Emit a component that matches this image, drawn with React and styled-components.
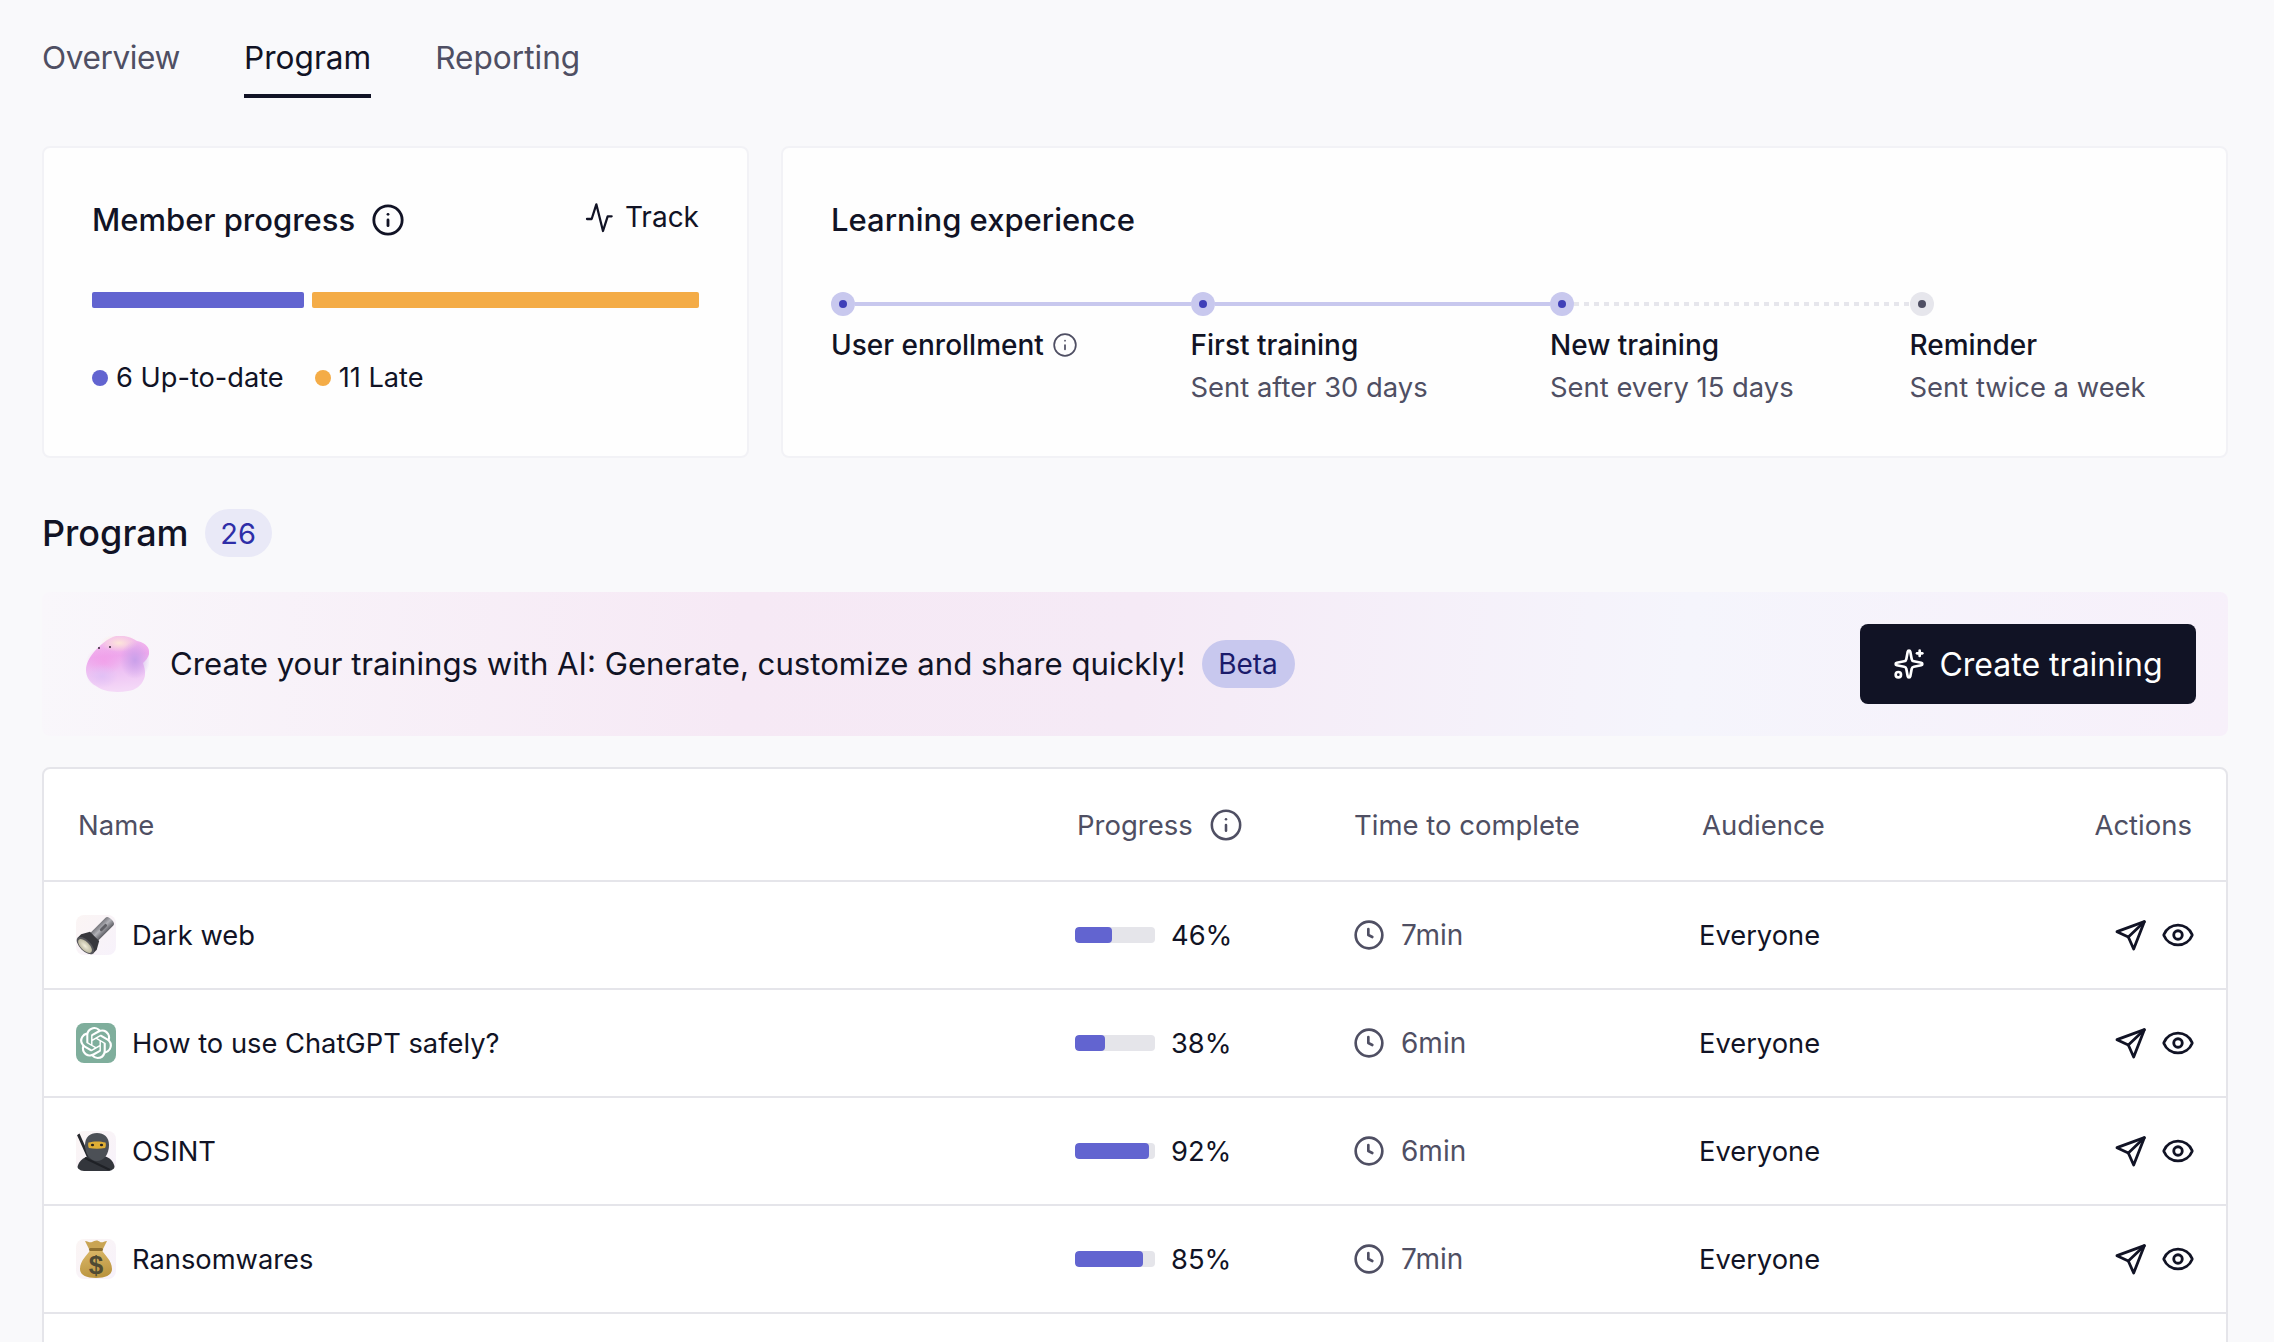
import React from 'react';
import styled, { createGlobalStyle } from 'styled-components';
import { Info, Eye, Sparkles } from 'lucide-react';
import { SiOpenai } from 'react-icons/si';

const GlobalStyle = createGlobalStyle`
  html, body {
    margin: 0;
    height: 1342px;
    overflow: hidden;
    background: #f9f9fb;
  }
  * { box-sizing: border-box; }
`;

const Page = styled.div`
  height: 1342px;
  overflow: hidden;
  padding: 38px 46px 0 42px;
  font-family: "Inter", "Liberation Sans", sans-serif;
  color: #111325;
  display: flex;
  flex-direction: column;
`;

const Tabs = styled.nav`
  display: flex;
  gap: 64px;
`;

const Tab = styled.a`
  font-size: 31.6px;
  line-height: 40px;
  padding-bottom: 16px;
  border-bottom: 4px solid ${(p) => (p.$active ? '#111325' : 'transparent')};
  color: ${(p) => (p.$active ? '#111325' : '#4f4f63')};
  &:first-child {
    letter-spacing: -0.4px;
  }
`;

const Cards = styled.div`
  display: grid;
  grid-template-columns: 707px 1fr;
  gap: 32px;
  margin-top: 48px;
`;

const Card = styled.section`
  height: 312px;
  background: #fefefe;
  border: 2px solid #f2f2f6;
  border-radius: 8px;
  padding: 52px 48px 0;
`;

const CardHead = styled.div`
  display: flex;
  justify-content: space-between;
  align-items: flex-start;
`;

const CardTitle = styled.h2`
  margin: 0;
  display: flex;
  align-items: center;
  gap: 16px;
  font-size: 31px;
  line-height: 40px;
  font-weight: 500;
`;

const TrackLink = styled.a`
  display: flex;
  align-items: center;
  gap: 8px;
  font-size: 28px;
  line-height: 32px;
  margin-top: 1px;
`;

const SplitBar = styled.div`
  display: flex;
  gap: 8px;
  margin-top: 52px;
`;

const Segment = styled.div`
  height: 16px;
  border-radius: 2px;
  flex: ${(p) => p.$flex};
  background: ${(p) => p.$color};
`;

const Legend = styled.div`
  display: flex;
  gap: 31px;
  margin-top: 52px;
`;

const LegendItem = styled.div`
  display: flex;
  align-items: center;
  gap: 8px;
  font-size: 27.2px;
  line-height: 36px;
`;

const LegendDot = styled.span`
  width: 16px;
  height: 16px;
  border-radius: 50%;
  background: ${(p) => p.$color};
`;

const Timeline = styled.div`
  display: grid;
  grid-template-columns: repeat(3, 359.5px) 1fr;
  margin-top: 52px;
`;

const StepTrack = styled.div`
  display: flex;
  align-items: center;
  height: 24px;
`;

const StepDot = styled.span`
  flex: none;
  width: 24px;
  height: 24px;
  border-radius: 50%;
  display: grid;
  place-items: center;
  background: ${(p) => (p.$muted ? '#e6e6ec' : '#c8c8ee')};
  &::after {
    content: '';
    width: 8px;
    height: 8px;
    border-radius: 50%;
    background: ${(p) => (p.$muted ? '#4f4f63' : '#4040b8')};
  }
`;

const StepLine = styled.span`
  flex: 1;
  height: 4px;
  background: #c8c8ee;
`;

const StepDotted = styled.span`
  flex: 1;
  height: 4px;
  background: repeating-linear-gradient(90deg, #e6e6ec 0 5px, transparent 5px 10px);
`;

const StepLabel = styled.div`
  display: flex;
  align-items: center;
  gap: 8px;
  margin-top: 11px;
  font-size: 28px;
  font-weight: 450;
  line-height: 36px;
`;

const StepSub = styled.div`
  margin-top: 6px;
  font-size: 27.4px;
  line-height: 36px;
  color: #4f4f63;
`;

const SectionHead = styled.div`
  display: flex;
  align-items: center;
  gap: 16px;
  margin-top: 51px;
`;

const SectionTitle = styled.h1`
  margin: 0;
  font-size: 36px;
  line-height: 48px;
  font-weight: 450;
`;

const CountBadge = styled.span`
  width: 67px;
  height: 48px;
  border-radius: 24px;
  display: grid;
  place-items: center;
  background: #e9e9f7;
  color: #2e2ea8;
  font-size: 29px;
`;

const Banner = styled.div`
  margin-top: 35px;
  height: 144px;
  flex: none;
  border-radius: 8px;
  padding: 0 32px 0 44px;
  display: flex;
  align-items: center;
  background: linear-gradient(95deg, #f9f7fb 0%, #f6e9f5 32%, #f5eaf6 50%, #f5f5fc 75%, #f7f0fa 100%);
`;

const BannerText = styled.span`
  margin-left: 21px;
  font-size: 31.15px;
  line-height: 48px;
`;

const BetaBadge = styled.span`
  margin-left: 16px;
  width: 93px;
  height: 48px;
  border-radius: 24px;
  display: grid;
  place-items: center;
  background: #c8c8ee;
  color: #1b1b6b;
  font-size: 28px;
`;

const CreateButton = styled.button`
  margin-left: auto;
  width: 336px;
  height: 80px;
  border: 0;
  border-radius: 8px;
  background: #111325;
  color: #fff;
  font: inherit;
  font-size: 32px;
  display: flex;
  align-items: center;
  justify-content: center;
  gap: 14px;
`;

const Table = styled.div`
  margin-top: 31px;
  height: 700px;
  flex: none;
  background: #fff;
  border: 2px solid #e5e5ea;
  border-radius: 8px;
`;

const Row = styled.div`
  display: grid;
  grid-template-columns: ${(p) => (p.$head ? '999px 277px 348px' : '999px 278px 346px')} 1fr auto;
  align-items: center;
  height: ${(p) => (p.$head ? '113px' : '108px')};
  padding: ${(p) => (p.$head ? '0 34px 0 34px' : '0 31px 0 32px')};
  border-bottom: 2px solid #e5e5ea;
  font-size: ${(p) => (p.$head ? '27.5px' : '27.3px')};
  color: ${(p) => (p.$head ? '#4f4f63' : '#111325')};
`;

const HeadCell = styled.div`
  display: flex;
  align-items: center;
  gap: 16px;
`;

const NameCell = styled.div`
  display: flex;
  align-items: center;
  gap: 16px;
`;

const IconTile = styled.span`
  width: 40px;
  height: 40px;
  border-radius: 8px;
  display: grid;
  place-items: center;
  overflow: hidden;
  flex: none;
  background: ${(p) => p.$bg || 'linear-gradient(135deg, #fbf5f4, #f7f2fb)'};
`;

const ProgressCell = styled.div`
  display: flex;
  align-items: center;
  gap: 16px;
`;

const ProgressTrack = styled.div`
  width: 80px;
  height: 16px;
  border-radius: 4px;
  background: #e5e5ea;
  overflow: hidden;
`;

const ProgressFill = styled.div`
  height: 100%;
  border-radius: 4px;
  background: #6264d0;
`;

const TimeCell = styled.div`
  display: flex;
  align-items: center;
  gap: 16px;
  font-size: 28px;
  color: #4f4f63;
`;

const Actions = styled.div`
  display: flex;
  align-items: center;
  gap: 14px;
`;

const ActivityIcon = () => (
  <svg width="32" height="32" viewBox="0 0 24 24" fill="none" stroke="#111325" strokeWidth="1.7" strokeLinecap="round" strokeLinejoin="round">
    <path d="M1.5 13.5h3.5l3.5-11 5 20 3.5-11h3" />
  </svg>
);

const ClockIcon = () => (
  <svg width="32" height="32" viewBox="0 0 24 24" fill="none" stroke="#4f4f63" strokeWidth="2" strokeLinecap="round" strokeLinejoin="round">
    <circle cx="12" cy="12" r="10" />
    <path d="M11.5 7.5v4.5l3 1.5" />
  </svg>
);

const SendIcon = () => (
  <svg width="32" height="32" viewBox="0 0 24 24" fill="none" stroke="#111325" strokeWidth="2.1" strokeLinecap="round" strokeLinejoin="round">
    <path d="M22 2 1.5 9.5l8.5 4 4 9L22 2Z" />
    <path d="M22 2 10 13.5" />
  </svg>
);

const Blob = () => (
  <svg width="63" height="57" viewBox="0 0 63 57">
    <defs>
      <linearGradient id="blobBody" x1="0" y1="0" x2="0.1" y2="1">
        <stop offset="0" stopColor="#f4c0ee" />
        <stop offset="0.4" stopColor="#eea8ec" />
        <stop offset="0.7" stopColor="#eec4f4" />
        <stop offset="1" stopColor="#f4d8f7" />
      </linearGradient>
      <radialGradient id="blobTop">
        <stop offset="0" stopColor="#fde6da" />
        <stop offset="1" stopColor="#fde6da" stopOpacity="0" />
      </radialGradient>
      <radialGradient id="blobSide">
        <stop offset="0" stopColor="#c9a0ea" />
        <stop offset="1" stopColor="#c9a0ea" stopOpacity="0" />
      </radialGradient>
      <radialGradient id="blobHot">
        <stop offset="0" stopColor="#f29ce8" stopOpacity="0.7" />
        <stop offset="1" stopColor="#f29ce8" stopOpacity="0" />
      </radialGradient>
      <radialGradient id="blobLow">
        <stop offset="0" stopColor="#deBef5" stopOpacity="0.8" />
        <stop offset="1" stopColor="#deBef5" stopOpacity="0" />
      </radialGradient>
    </defs>
    <path d="M30 0C38-1 45 1 51 5c6 1 12 5 12 10 1 5-3 9-6 12 2 6 3 11 1 16-3 7-8 11-16 12-12 2-24 1-32-5C3 46 0 40 0 34c0-6 3-12 8-18C13 10 22 2 30 0Z" fill="url(#blobBody)" />
    <ellipse cx="33" cy="7" rx="19" ry="9" fill="url(#blobTop)" />
    <ellipse cx="18" cy="25" rx="18" ry="14" fill="url(#blobHot)" />
    <ellipse cx="49" cy="24" rx="15" ry="19" fill="url(#blobSide)" />
    <ellipse cx="16" cy="40" rx="16" ry="12" fill="url(#blobLow)" />
    <circle cx="13" cy="12" r="1" fill="#3a2a3a" />
    <circle cx="24" cy="11" r="1" fill="#3a2a3a" />
  </svg>
);

const Flashlight = () => (
  <svg width="40" height="40" viewBox="0 0 40 40">
    <defs>
      <linearGradient id="torchBody" x1="0" y1="0" x2="1" y2="0">
        <stop offset="0" stopColor="#77777d" />
        <stop offset="0.45" stopColor="#b2b2b8" />
        <stop offset="1" stopColor="#5e5e64" />
      </linearGradient>
      <radialGradient id="torchLens">
        <stop offset="0" stopColor="#f2eedc" />
        <stop offset="1" stopColor="#bcb8a0" />
      </radialGradient>
    </defs>
    <g transform="rotate(45 20 20)">
      <path d="M14.5 24V1c0-2 2-3 5.500-3s5.500 1 5.500 3v23Z" fill="url(#torchBody)" />
      <rect x="18.500" y="5" width="3" height="9" rx="1.500" fill="#606066" />
      <path d="M13.500 22h13l4.500 8v5H9v-5Z" fill="#37373c" />
      <ellipse cx="20" cy="35" rx="11" ry="5.500" fill="#55555a" />
      <ellipse cx="20" cy="35.500" rx="8.800" ry="4.200" fill="url(#torchLens)" />
    </g>
  </svg>
);

const Ninja = () => (
  <svg width="40" height="40" viewBox="0 0 40 40">
    <path d="M1 4 3.500 2.500 14 26l-2.500 1.500Z" fill="#26282e" />
    <path d="M1 40c0-9 6-14 13-15h13c7 1 12 6 12 15Z" fill="#33363c" />
    <path d="M9 14C9 6 14 2 21 2s12 4 12 12c0 9-5 16-12 16S9 23 9 14Z" fill="#4c5056" />
    <path d="M12.500 11.500c5-1.500 12-1.500 17 0 .6 2 .4 4-.4 5.500-5 1-11 1-16.200 0-.8-1.500-1-3.500-.4-5.500Z" fill="#dfae35" />
    <ellipse cx="16.500" cy="14" rx="1.600" ry="1.200" fill="#2b2520" />
    <ellipse cx="25.500" cy="14" rx="1.600" ry="1.200" fill="#2b2520" />
    <path d="M9 27 34 39" stroke="#1f2126" strokeWidth="2" />
  </svg>
);

const MoneyBag = () => (
  <svg width="40" height="40" viewBox="0 0 40 40">
    <defs>
      <linearGradient id="bagFill" x1="0" y1="0" x2="0.2" y2="1">
        <stop offset="0" stopColor="#dcb96a" />
        <stop offset="1" stopColor="#bb9540" />
      </linearGradient>
    </defs>
    <path d="M9 2c3 .5 5 2 7 1 3-2 6-2 8 0 2 1 4-.5 7-1l-4 8H13Z" fill="#c9a453" />
    <path d="M14 11h12c2 5 10 10 10 19 0 6-6 9-16 9S4 36 4 30c0-9 8-14 10-19Z" fill="url(#bagFill)" />
    <rect x="13" y="9" width="14" height="3" rx="1.500" fill="#8f7030" />
    <text x="20" y="35" textAnchor="middle" fontFamily="Liberation Sans" fontWeight="700" fontSize="26" fill="#4f4a34">$</text>
  </svg>
);

const steps = [
  { title: 'User enrollment', info: true },
  { title: 'First training', sub: 'Sent after 30 days' },
  { title: 'New training', sub: 'Sent every 15 days' },
  { title: 'Reminder', sub: 'Sent twice a week', muted: true },
];

const rows = [
  { name: 'Dark web', icon: <IconTile><Flashlight /></IconTile>, pct: 46, time: '7min' },
  { name: 'How to use ChatGPT safely?', icon: <IconTile $bg="#7fae9c"><SiOpenai size={32} color="#fff" /></IconTile>, pct: 38, time: '6min' },
  { name: 'OSINT', icon: <IconTile><Ninja /></IconTile>, pct: 92, time: '6min' },
  { name: 'Ransomwares', icon: <IconTile><MoneyBag /></IconTile>, pct: 85, time: '7min' },
];

export default function App() {
  return (
    <Page>
      <GlobalStyle />
      <Tabs>
        <Tab>Overview</Tab>
        <Tab $active>Program</Tab>
        <Tab>Reporting</Tab>
      </Tabs>

      <Cards>
        <Card>
          <CardHead>
            <CardTitle>
              Member progress
              <Info size={34} color="#111325" strokeWidth={2} />
            </CardTitle>
            <TrackLink><ActivityIcon />Track</TrackLink>
          </CardHead>
          <SplitBar>
            <Segment $flex="212 212 0" $color="#6264d0" />
            <Segment $flex="387 387 0" $color="#f4ac47" />
          </SplitBar>
          <Legend>
            <LegendItem><LegendDot $color="#6264d0" />6 Up-to-date</LegendItem>
            <LegendItem><LegendDot $color="#f4ac47" />11 Late</LegendItem>
          </Legend>
        </Card>
        <Card>
          <CardTitle>Learning experience</CardTitle>
          <Timeline>
            {steps.map((s, i) => (
              <div key={s.title}>
                <StepTrack>
                  <StepDot $muted={s.muted} />
                  {i < 2 && <StepLine />}
                  {i === 2 && <StepDotted />}
                </StepTrack>
                <StepLabel>
                  {s.title}
                  {s.info && <Info size={26} color="#4f4f63" strokeWidth={1.6} />}
                </StepLabel>
                {s.sub && <StepSub>{s.sub}</StepSub>}
              </div>
            ))}
          </Timeline>
        </Card>
      </Cards>

      <SectionHead>
        <SectionTitle>Program</SectionTitle>
        <CountBadge>26</CountBadge>
      </SectionHead>

      <Banner>
        <Blob />
        <BannerText>Create your trainings with AI: Generate, customize and share quickly!</BannerText>
        <BetaBadge>Beta</BetaBadge>
        <CreateButton><Sparkles size={32} strokeWidth={2} />Create training</CreateButton>
      </Banner>

      <Table>
        <Row $head>
          <HeadCell>Name</HeadCell>
          <HeadCell>Progress<Info size={34} color="#4f4f63" strokeWidth={1.8} /></HeadCell>
          <HeadCell>Time to complete</HeadCell>
          <HeadCell>Audience</HeadCell>
          <HeadCell>Actions</HeadCell>
        </Row>
        {rows.map((r) => (
          <Row key={r.name}>
            <NameCell>{r.icon}{r.name}</NameCell>
            <ProgressCell>
              <ProgressTrack>
                <ProgressFill style={{ width: `${r.pct}%` }} />
              </ProgressTrack>
              {r.pct}%
            </ProgressCell>
            <TimeCell><ClockIcon />{r.time}</TimeCell>
            <div>Everyone</div>
            <Actions>
              <SendIcon />
              <Eye size={34} color="#111325" strokeWidth={2} />
            </Actions>
          </Row>
        ))}
      </Table>
    </Page>
  );
}
